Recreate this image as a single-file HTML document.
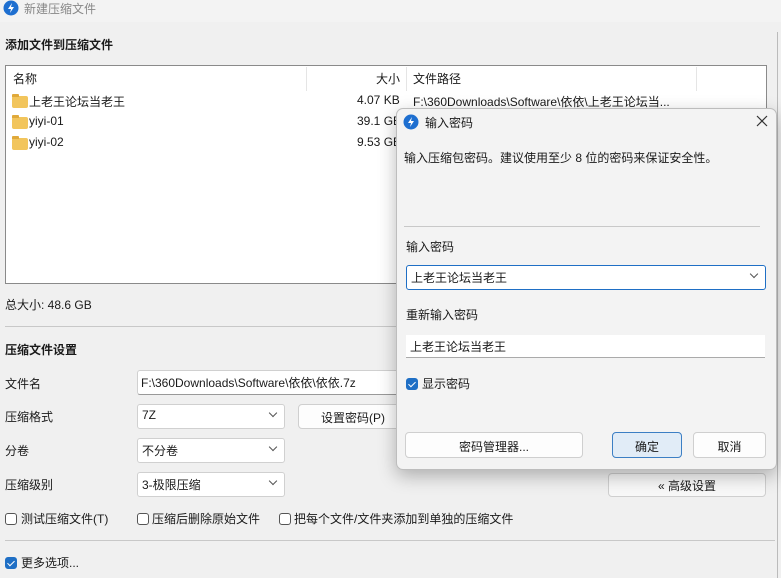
<html><head><style>
body{margin:0;width:781px;height:578px;overflow:hidden;background:#f0f0f0;font-family:"Liberation Sans","Noto Sans CJK SC",sans-serif;font-size:12px;color:#1a1a1a;position:relative}
.a{position:absolute;white-space:nowrap}
.box{position:absolute;background:#fff;border:1px solid #d0d0d0;border-radius:3px;box-sizing:border-box}
.btn{position:absolute;background:#fdfdfd;border:1px solid #cfcfcf;border-radius:4px;box-sizing:border-box;text-align:center}
.chk{position:absolute;width:12px;height:12px;border:1px solid #555;border-radius:3px;box-sizing:border-box;background:#fff}
.chk.on{background:#1f6fc5;border-color:#1f6fc5}
.chk.on:after{content:"";position:absolute;left:3px;top:1px;width:3px;height:6px;border-right:1px solid #fff;border-bottom:1px solid #fff;transform:rotate(45deg)}
.fold{position:absolute;width:16px;height:12px;background:#f2c55c;border-radius:2px}
.fold:before{content:"";position:absolute;left:0;top:-2px;width:7px;height:3px;background:#e0a93a;border-radius:1px 1px 0 0}
.dd{position:absolute;right:8px;top:5px;width:5px;height:5px;border-right:1px solid #555;border-bottom:1px solid #555;transform:rotate(45deg)}
</style></head><body>
<div class="a" style="left:0;top:0;width:781px;height:22px;background:#f3f3f3"></div>
<svg class="a" style="left:3px;top:0" width="16" height="16" viewBox="0 0 16 16"><circle cx="8" cy="8" r="7.5" fill="#1e6fd0"/><path d="M9 3L5 9h3l-1 4 4-6H8z" fill="#fff"/></svg>
<div class="a" style="left:24px;top:0px;color:#888;font-size:12px">新建压缩文件</div>
<div class="a" style="left:5px;top:36px;font-weight:bold">添加文件到压缩文件</div>
<div class="a" style="left:5px;top:65px;width:762px;height:219px;background:#fff;border:1px solid #8a8a8a;box-sizing:border-box"></div>
<div class="a" style="left:306px;top:67px;width:1px;height:24px;background:#e5e5e5"></div>
<div class="a" style="left:406px;top:67px;width:1px;height:24px;background:#e5e5e5"></div>
<div class="a" style="left:696px;top:67px;width:1px;height:24px;background:#e5e5e5"></div>
<div class="a" style="left:13px;top:70px">名称</div>
<div class="a" style="left:376px;top:70px">大小</div>
<div class="a" style="left:413px;top:70px">文件路径</div>
<div class="fold" style="left:12px;top:96px"></div><div class="a" style="left:29px;top:93px">上老王论坛当老王</div>
<div class="fold" style="left:12px;top:117px"></div><div class="a" style="left:29px;top:114px">yiyi-01</div>
<div class="fold" style="left:12px;top:138px"></div><div class="a" style="left:29px;top:135px">yiyi-02</div>
<div class="a" style="left:357px;top:93px">4.07 KB</div>
<div class="a" style="left:357px;top:114px">39.1 GB</div>
<div class="a" style="left:357px;top:135px">9.53 GB</div>
<div class="a" style="left:413px;top:93px">F:\360Downloads\Software\依依\上老王论坛当...</div>
<div class="a" style="left:777px;top:32px;width:4px;height:546px;border-left:1px solid #bbb"></div>
<div class="a" style="left:5px;top:296px">总大小: 48.6 GB</div>
<div class="a" style="left:5px;top:326px;width:770px;height:1px;background:#c8c8c8"></div>
<div class="a" style="left:5px;top:341px;font-weight:bold">压缩文件设置</div>
<div class="a" style="left:5px;top:375px">文件名</div>
<div class="box" style="left:137px;top:370px;width:270px;height:25px;border-bottom-color:#999"></div>
<div class="a" style="left:141px;top:374px">F:\360Downloads\Software\依依\依依.7z</div>
<div class="a" style="left:5px;top:408px">压缩格式</div>
<div class="box" style="left:137px;top:404px;width:148px;height:25px"><span class="a" style="left:4px;top:3px">7Z</span><div class="dd"></div></div>
<div class="btn" style="left:298px;top:404px;width:110px;height:25px;padding-top:4px">设置密码(P)</div>
<div class="a" style="left:5px;top:442px">分卷</div>
<div class="box" style="left:137px;top:438px;width:148px;height:25px"><span class="a" style="left:4px;top:3px">不分卷</span><div class="dd"></div></div>
<div class="a" style="left:5px;top:476px">压缩级别</div>
<div class="box" style="left:137px;top:472px;width:148px;height:25px"><span class="a" style="left:4px;top:3px">3-极限压缩</span><div class="dd"></div></div>
<div class="btn" style="left:608px;top:473px;width:158px;height:24px;padding-top:3px;background:#f8f8f8">« 高级设置</div>
<div class="chk" style="left:5px;top:513px"></div><div class="a" style="left:21px;top:510px">测试压缩文件(T)</div>
<div class="chk" style="left:137px;top:513px"></div><div class="a" style="left:152px;top:510px">压缩后删除原始文件</div>
<div class="chk" style="left:279px;top:513px"></div><div class="a" style="left:294px;top:510px">把每个文件/文件夹添加到单独的压缩文件</div>
<div class="a" style="left:5px;top:540px;width:770px;height:1px;background:#c8c8c8"></div>
<div class="chk on" style="left:5px;top:557px"></div><div class="a" style="left:21px;top:554px">更多选项...</div>

<div class="a" style="left:396px;top:108px;width:381px;height:362px;background:#f3f3f3;border:1px solid #bdbdbd;border-radius:7px;box-shadow:0 6px 18px rgba(0,0,0,.28);box-sizing:border-box"></div>
<svg class="a" style="left:403px;top:114px" width="16" height="16" viewBox="0 0 16 16"><circle cx="8" cy="8" r="7.5" fill="#1e6fd0"/><path d="M9 3L5 9h3l-1 4 4-6H8z" fill="#fff"/></svg>
<div class="a" style="left:425px;top:114px">输入密码</div>
<svg class="a" style="left:756px;top:115px" width="12" height="12" viewBox="0 0 12 12"><path d="M1 1L11 11M11 1L1 11" stroke="#333" stroke-width="1.2"/></svg>
<div class="a" style="left:404px;top:149px">输入压缩包密码。建议使用至少 8 位的密码来保证安全性。</div>
<div class="a" style="left:404px;top:226px;width:356px;height:1px;background:#c8c8c8"></div>
<div class="a" style="left:406px;top:238px">输入密码</div>
<div class="a" style="left:406px;top:265px;width:360px;height:25px;background:#fff;border:1px solid #1f6fc5;border-radius:3px;box-sizing:border-box"><span class="a" style="left:4px;top:3px">上老王论坛当老王</span><div class="dd"></div></div>
<div class="a" style="left:406px;top:306px">重新输入密码</div>
<div class="a" style="left:406px;top:335px;width:359px;height:23px;background:#fff;border-bottom:1px solid #aaa;box-sizing:border-box"><span class="a" style="left:4px;top:3px">上老王论坛当老王</span></div>
<div class="chk on" style="left:406px;top:378px"></div><div class="a" style="left:422px;top:375px">显示密码</div>
<div class="btn" style="left:405px;top:432px;width:178px;height:26px;padding-top:5px">密码管理器...</div>
<div class="btn" style="left:612px;top:432px;width:70px;height:26px;padding-top:5px;background:#e1ecf7;border-color:#3c7fc4">确定</div>
<div class="btn" style="left:693px;top:432px;width:73px;height:26px;padding-top:5px">取消</div>
</body></html>
